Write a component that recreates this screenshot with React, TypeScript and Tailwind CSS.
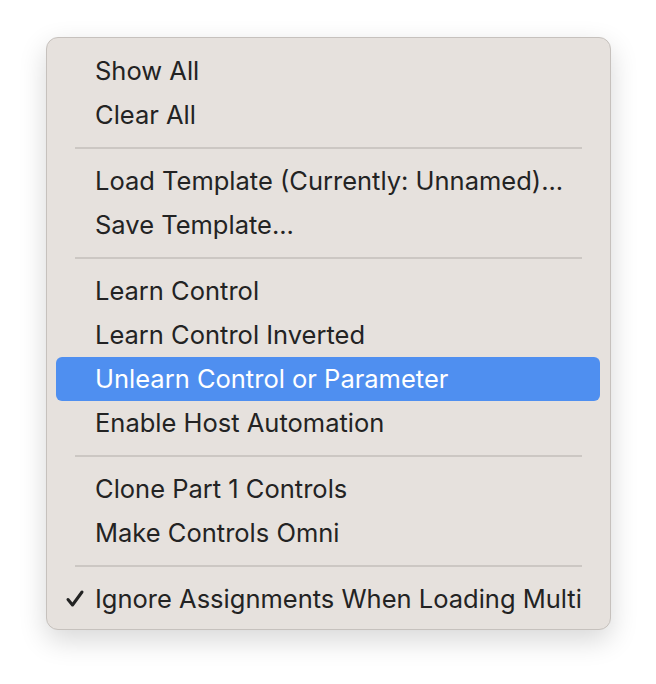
import React from "react";

type Entry = { label: string; checked?: boolean; active?: boolean } | "sep";

const ITEMS: Entry[] = [
  { label: "Show All" },
  { label: "Clear All" },
  "sep",
  { label: "Load Template (Currently: Unnamed)..." },
  { label: "Save Template..." },
  "sep",
  { label: "Learn Control" },
  { label: "Learn Control Inverted" },
  { label: "Unlearn Control or Parameter", active: true },
  { label: "Enable Host Automation" },
  "sep",
  { label: "Clone Part 1 Controls" },
  { label: "Make Controls Omni" },
  "sep",
  { label: "Ignore Assignments When Loading Multi", checked: true },
];

function Check() {
  return (
    <svg width="20" height="20" viewBox="0 0 20 20" fill="none" stroke="currentColor" strokeWidth="3" strokeLinecap="round" strokeLinejoin="round">
      <path d="M3 10.5l4.5 5.5L17 3" />
    </svg>
  );
}

export default function App() {
  return (
    <div className="min-h-[684px] bg-white pt-[37px] pl-[46px]" style={{ fontFamily: "Inter, 'Noto Sans', sans-serif" }}>
      <div className="w-[565px] rounded-[12px] border border-[#c6c1bd] bg-[#e6e1dd] pt-[11px] pb-[8px] pl-[9px] pr-[10px] shadow-[0_10px_28px_rgba(0,0,0,0.16)]">
        {ITEMS.map((it, i) =>
          it === "sep" ? (
            <div key={i} className="flex h-[22px] items-center pl-[19px] pr-[18px]">
              <div className="h-[2px] w-full bg-[#ccc7c3]" />
            </div>
          ) : (
            <div
              key={i}
              className={
                it.active
                  ? "relative flex h-[44px] items-center rounded-[6px] bg-[#4f8ff0] pl-[39px] text-[25.5px] text-white"
                  : "relative flex h-[44px] items-center rounded-[6px] pl-[39px] text-[25.5px] text-[#232323]"
              }
            >
              {it.checked && (
                <span className="absolute left-[9px] top-[12px] text-[#232323]">
                  <Check />
                </span>
              )}
              {it.label}
            </div>
          )
        )}
      </div>
    </div>
  );
}
